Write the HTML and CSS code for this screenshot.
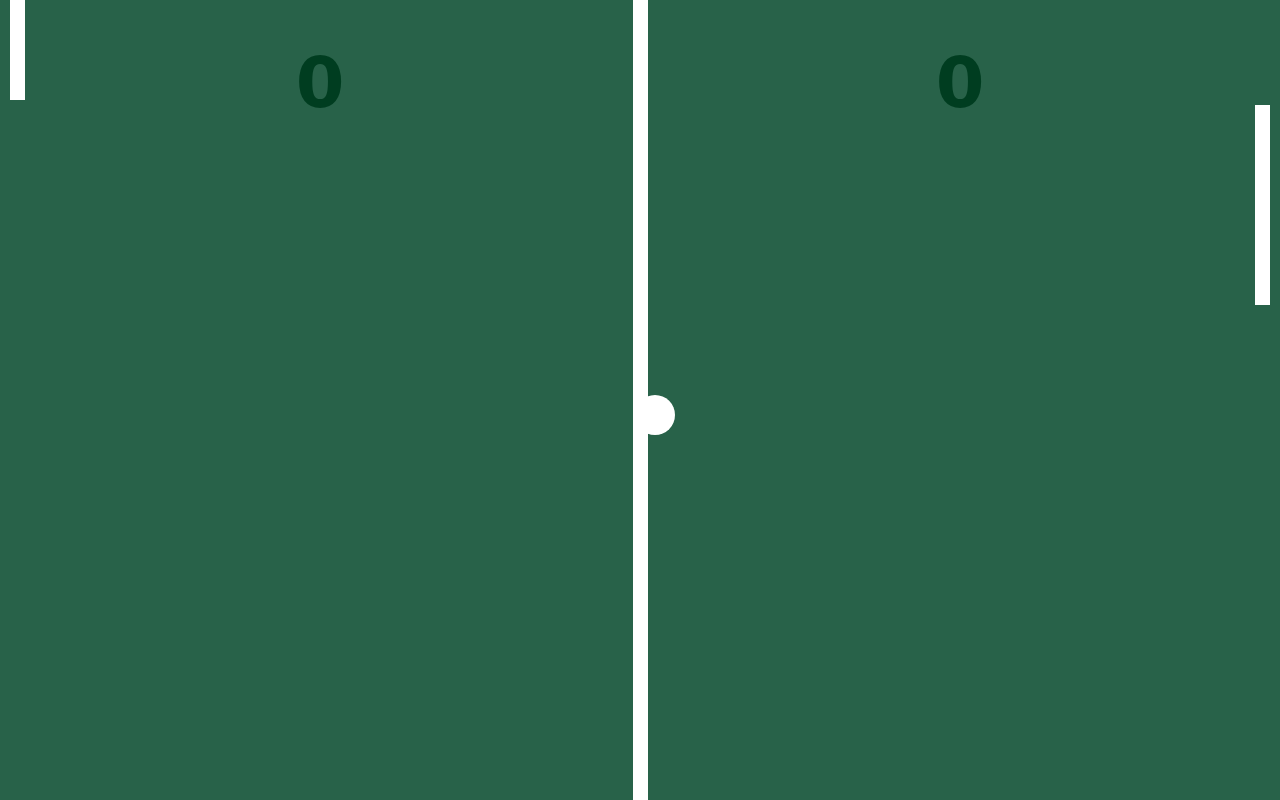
FILE: index.html
```html
<!DOCTYPE html>
<html>
<head>
<meta charset="utf-8">
<link rel="stylesheet" href="styles.css">
<title>Pong</title>
</head>
<body>
<div class="court">
  <div class="half"><div class="score">0</div></div>
  <div class="half"><div class="score">0</div></div>
  <div class="net"></div>
  <div class="paddle paddle-left"></div>
  <div class="paddle paddle-right"></div>
  <div class="ball"></div>
</div>
</body>
</html>
```
FILE: styles.css
```css
html, body {
  margin: 0;
  padding: 0;
  height: 100%;
  overflow: hidden;
}
body {
  background: #286249;
  font-family: "DejaVu Sans", sans-serif;
}
.court {
  position: relative;
  width: 1280px;
  height: 800px;
  display: grid;
  grid-template-columns: 1fr 1fr;
}
.half {
  display: flex;
  justify-content: center;
  padding-top: 42px;
}
.score {
  font-size: 70px;
  font-weight: bold;
  color: #003d20;
  line-height: normal;
}
.net {
  position: absolute;
  left: 632.5px;
  top: 0;
  width: 15px;
  height: 800px;
  background: #ffffff;
}
.paddle {
  position: absolute;
  width: 15px;
  height: 100px;
  background: #ffffff;
}
.paddle-left {
  left: 10px;
  top: 0;
}
.paddle-right {
  left: 1255px;
  top: 105px;
  height: 200px;
}
.ball {
  position: absolute;
  left: 635px;
  top: 395px;
  width: 40px;
  height: 40px;
  border-radius: 50%;
  background: #ffffff;
}
```
